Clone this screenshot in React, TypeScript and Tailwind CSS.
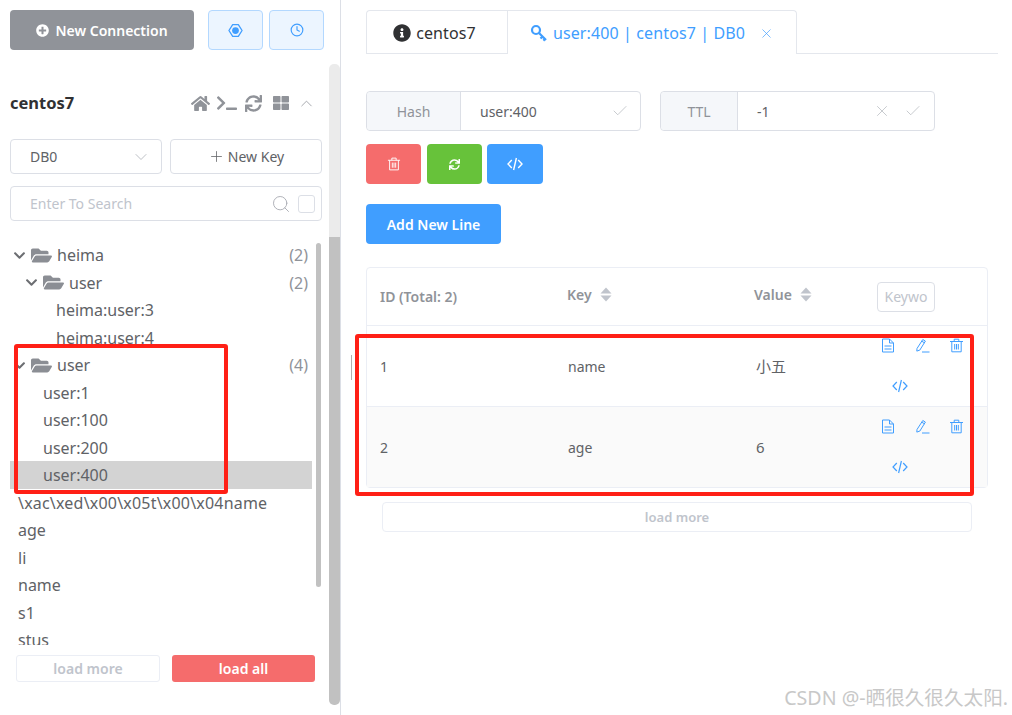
import { Clock, Check, X, ChevronDown, ChevronUp, Plus, Search } from 'lucide-react'
import { FaHome, FaTerminal, FaSync, FaThLarge, FaFolderOpen, FaChevronDown, FaInfoCircle, FaPlusCircle } from 'react-icons/fa'

function GearIcon() {
  return (
    <svg width="15" height="15" viewBox="0 0 16 16" className="text-[#409eff]">
      <path d="M5 1.8h6L15 8l-4 6.2H5L1 8Z" fill="none" stroke="currentColor" strokeWidth="1.4" strokeLinejoin="round" />
      <circle cx="8" cy="8" r="3.6" fill="currentColor" />
    </svg>
  )
}

function KeyIcon() {
  return (
    <svg width="18" height="18" viewBox="0 0 18 18" fill="none" stroke="currentColor" strokeWidth="2.2">
      <circle cx="6" cy="6" r="4" />
      <path d="M9 9l7 7M12.5 12.5l-2 2M15 15l-1.6 1.6" />
    </svg>
  )
}

function CodeIcon({ size = 16, strokeWidth = 1.2 }: { size?: number; strokeWidth?: number }) {
  return (
    <svg width={size} height={size} viewBox="0 0 16 16" fill="none" stroke="currentColor" strokeWidth={strokeWidth}>
      <path d="M4.8 4 1 8l3.8 4M11.2 4 15 8l-3.8 4M9.4 2 6.6 14" />
    </svg>
  )
}

function DocIcon() {
  return (
    <svg width="14" height="15" viewBox="0 0 14 15" fill="none" stroke="#409eff" strokeWidth="1">
      <path d="M1.5 1h7l4 4v9h-11Z" />
      <path d="M8.5 1v4h4M3.5 8h7M3.5 11h7" />
    </svg>
  )
}

function EditIcon() {
  return (
    <svg width="15" height="15" viewBox="0 0 15 15" fill="none" stroke="#409eff" strokeWidth="1">
      <path d="M2 10.5 7.8 1.5l2.6 1.6-5.6 9-3 1Z" />
      <path d="M6.8 3.2l2.6 1.6M7 14h7.5" />
    </svg>
  )
}

function TrashIcon({ color = '#409eff', size = 15 }: { color?: string; size?: number }) {
  return (
    <svg width={size} height={size} viewBox="0 0 15 15" fill="none" stroke={color} strokeWidth="1">
      <path d="M1 3.5h13M5.2 3.5V1.2h4.6v2.3M2.8 3.5v10.3h9.4V3.5M5.7 6v5.5M7.5 6v5.5M9.3 6v5.5" />
    </svg>
  )
}

function SortCaret() {
  return (
    <svg width="12" height="15" viewBox="0 0 12 15" fill="#c0c4cc">
      <path d="M6 0.5 11.5 6.5H.5Z" />
      <path d="M6 14.5 11.5 8.5H.5Z" />
    </svg>
  )
}

type TreeRow = {
  label: string
  indent: number
  folder?: boolean
  count?: number
  active?: boolean
  wide?: boolean
}

const rows: TreeRow[] = [
  { label: 'heima', indent: 3, folder: true, count: 2 },
  { label: 'user', indent: 15, folder: true, count: 2 },
  { label: 'heima:user:3', indent: 46 },
  { label: 'heima:user:4', indent: 46 },
  { label: 'user', indent: 3, folder: true, count: 4 },
  { label: 'user:1', indent: 33 },
  { label: 'user:100', indent: 33 },
  { label: 'user:200', indent: 33 },
  { label: 'user:400', indent: 33, active: true },
  { label: '\\xac\\xed\\x00\\x05t\\x00\\x04name', indent: 8, wide: true },
  { label: 'age', indent: 8 },
  { label: 'li', indent: 8 },
  { label: 'name', indent: 8 },
  { label: 's1', indent: 8 },
  { label: 'stus', indent: 8 },
]

const lines = [
  { id: 1, key: 'name', value: '小五' },
  { id: 2, key: 'age', value: '6' },
]

function Sidebar() {
  return (
    <aside className="flex h-full w-[341px] shrink-0 border-r border-[#dcdfe6] pl-[10px] pt-[10px]">
      <div className="w-[314px] shrink-0">
        <div className="flex h-[40px] items-stretch">
          <button className="flex w-[184px] items-center justify-center gap-[6px] rounded-[4px] bg-[#909399] text-[14px] font-semibold text-white">
            <FaPlusCircle size={13} />
            New Connection
          </button>
          <button className="ml-[14px] flex w-[55px] items-center justify-center rounded-[4px] border border-[#b3d8ff] bg-[#ecf5ff]">
            <GearIcon />
          </button>
          <button className="ml-[6px] flex w-[55px] items-center justify-center rounded-[4px] border border-[#b3d8ff] bg-[#ecf5ff]">
            <Clock size={14} color="#409eff" />
          </button>
        </div>

        <div className="mt-[35px] flex h-[36px] items-center text-[#909399]">
          <span className="text-[16.5px] font-bold text-[#303133]">centos7</span>
          <div className="ml-[117px] flex items-center">
            <FaHome size={19} />
            <FaTerminal size={20} className="ml-[7px]" />
            <FaSync size={17} className="ml-[8px]" />
            <FaThLarge size={16} className="ml-[11px]" />
            <ChevronUp size={19} strokeWidth={1} className="ml-[8px] text-[#909399]" />
          </div>
        </div>

        <div className="mt-[18px] flex h-[35px] w-[312px] gap-[8px] text-[14px]">
          <div className="flex w-[152px] items-center justify-between rounded-[4px] border border-[#dcdfe6] pl-[19px] pr-[10px] text-[#606266]">
            DB0
            <ChevronDown size={20} strokeWidth={1} className="text-[#b0b3b9]" />
          </div>
          <button className="flex w-[152px] items-center justify-center gap-[3px] rounded-[4px] border border-[#dcdfe6] text-[#606266]">
            <Plus size={17} strokeWidth={1.1} />
            New Key
          </button>
        </div>

        <div className="mt-[12px] flex h-[35px] w-[312px] items-center rounded-[4px] border border-[#dcdfe6] pl-[19px] pr-[6px] text-[14px] text-[#c0c4cc]">
          <span className="flex-1">Enter To Search</span>
          <Search size={20} strokeWidth={1.1} className="text-[#a8abb2]" />
          <span className="ml-[7px] h-[18px] w-[17px] rounded-[3px] border border-[#dcdfe6]" />
        </div>

        <div className="mt-[20px] flex h-[404px] items-start overflow-hidden">
          <div className="h-full w-[302px] shrink-0">
            {rows.map((row, i) => (
              <div
                key={i}
                className={`flex items-center pr-[4px] text-[16px] text-[#606266] ${i % 2 === 0 ? 'h-[28px]' : 'h-[27px]'} ${row.active ? 'bg-[#d3d3d3]' : ''}`}
                style={{ paddingLeft: row.indent }}
              >
                {row.folder && (
                  <>
                    <FaChevronDown size={13} className="mr-[5px] text-[#6c6e72]" />
                    <FaFolderOpen size={21} className="mr-[5px] text-[#8b8e94]" />
                  </>
                )}
                <span className={`flex-1 whitespace-nowrap ${row.wide ? 'tracking-[0.2px]' : ''}`}>{row.label}</span>
                {row.count !== undefined && <span className="text-[#909399]">({row.count})</span>}
              </div>
            ))}
          </div>
          <div className="ml-[4px] mt-[2px] h-[344px] w-[5px] rounded-[3px] bg-[#c1c1c1]" />
        </div>

        <div className="mt-[10px] flex h-[27px] gap-[12px] pl-[6px] text-[14px] font-semibold">
          <button className="w-[144px] rounded-[3px] border border-[#ebeef5] text-[#c0c4cc]">load more</button>
          <button className="w-[143px] rounded-[3px] bg-[#f56c6c] text-white">load all</button>
        </div>
      </div>

      <div className="mb-[10px] ml-[5px] mt-[54px] flex w-[11px] flex-col overflow-hidden rounded-[5px]">
        <div className="h-[173px] bg-[#ebebeb]" />
        <div className="flex-1 bg-[#c1c1c1]" />
      </div>
    </aside>
  )
}

function KeyDetail() {
  return (
    <main className="relative w-[647px] shrink-0 pl-[25px] pt-[10px]">
      <div className="flex h-[44px] w-[632px] border-b border-[#e4e7ed]">
        <div className="flex h-[44px] w-[141px] items-center justify-center gap-[5px] rounded-tl-[4px] border-b border-l border-t border-[#e4e7ed] pr-[5px] pt-[1px] text-[16px] text-[#303133]">
          <FaInfoCircle size={18} />
          <span className="tracking-[0.1px]">centos7</span>
        </div>
        <div className="flex h-[44px] w-[290px] items-center justify-center gap-[5px] rounded-tr-[4px] border-x border-t border-[#e4e7ed] bg-white pt-[1px] text-[16px] text-[#409eff]">
          <KeyIcon />
          <span className="tracking-[0.12px]">user:400 | centos7 | DB0</span>
          <X size={15} strokeWidth={1.1} className="ml-[9px]" />
        </div>
      </div>

      <div className="mt-[37px] flex h-[40px] gap-[19px] text-[14px]">
        <div className="flex w-[275px] rounded-[4px] border border-[#dcdfe6] text-[#606266]">
          <span className="flex w-[94px] items-center justify-center rounded-l-[4px] border-r border-[#dcdfe6] bg-[#f5f7fa] text-[#909399]">Hash</span>
          <span className="flex flex-1 items-center justify-between pl-[19px] pr-[11px]">
            user:400
            <Check size={18} strokeWidth={1} className="text-[#b6b9bf]" />
          </span>
        </div>
        <div className="flex w-[275px] rounded-[4px] border border-[#dcdfe6] text-[#606266]">
          <span className="flex w-[77px] items-center justify-center rounded-l-[4px] border-r border-[#dcdfe6] bg-[#f5f7fa] text-[#909399]">TTL</span>
          <span className="flex flex-1 items-center pl-[19px] pr-[12px]">
            <span className="flex-1">-1</span>
            <X size={18} strokeWidth={1} className="mr-[13px] text-[#b6b9bf]" />
            <Check size={18} strokeWidth={1} className="text-[#b6b9bf]" />
          </span>
        </div>
      </div>

      <div className="mt-[13px] flex h-[40px]">
        <button className="flex w-[55px] items-center justify-center rounded-[4px] bg-[#f56c6c]">
          <TrashIcon color="#ffffff" size={14} />
        </button>
        <button className="ml-[6px] flex w-[55px] items-center justify-center rounded-[4px] bg-[#67c23a] text-white">
          <FaSync size={11} />
        </button>
        <button className="ml-[5px] flex w-[56px] items-center justify-center rounded-[4px] bg-[#409eff] text-white">
          <CodeIcon size={16} strokeWidth={1.4} />
        </button>
      </div>

      <button className="mt-[20px] h-[40px] w-[135px] rounded-[4px] bg-[#409eff] text-[14px] font-semibold text-white">
        Add New Line
      </button>

      <div className="mt-[23px] w-[622px] rounded-[4px] border border-[#ebeef5] text-[14px] text-[#606266]">
        <div className="grid h-[58px] grid-cols-[187px_187px_124px_1fr] items-center border-b border-[#ebeef5] font-semibold text-[#909399]">
          <span className="pl-[13px]">ID (Total: 2)</span>
          <span className="flex items-center gap-[8px] pb-[4px] pl-[13px]">Key <SortCaret /></span>
          <span className="flex items-center gap-[8px] pb-[4px] pl-[13px]">Value <SortCaret /></span>
          <span className="pl-[12px] font-normal">
            <span className="flex h-[30px] w-[58px] items-center justify-center overflow-hidden rounded-[4px] border border-[#dcdfe6] text-[#c0c4cc]">Keywo</span>
          </span>
        </div>
        {lines.map((line, i) => (
          <div
            key={line.id}
            className={`grid grid-cols-[187px_187px_124px_1fr] items-center ${i === 0 ? 'h-[81px] border-b border-[#ebeef5]' : 'h-[80px] bg-[#fafafa]'}`}
          >
            <span className={`pl-[13px] ${i === 1 ? 'pt-[1px]' : ''}`}>{line.id}</span>
            <span className={`pl-[14px] ${i === 1 ? 'pt-[1px]' : ''}`}>{line.key}</span>
            <span className={`pl-[15px] text-[15px] ${i === 1 ? 'pt-[1px]' : ''}`}>{line.value}</span>
            <div className="flex h-full flex-col pl-[16px] pt-[12px] text-[#409eff]">
              <div className="flex w-[83px] justify-between">
                <DocIcon />
                <EditIcon />
                <TrashIcon />
              </div>
              <div className="ml-[11px] mt-[25px]">
                <CodeIcon />
              </div>
            </div>
          </div>
        ))}
      </div>

      <button className="ml-[16px] mt-[14px] h-[30px] w-[590px] rounded-[4px] border border-[#ebeef5] pt-[1px] text-[13px] font-semibold text-[#c0c4cc]">
        load more
      </button>

      {/* resize handle */}
      <div className="absolute left-[10px] top-[355px] h-[25px] w-px bg-[#b0b0b0]" />
    </main>
  )
}

export default function App() {
  return (
    <div
      className="relative flex h-[715px] w-[1012px] overflow-hidden bg-white"
      style={{ fontFamily: '"Noto Sans", "Noto Sans CJK SC", sans-serif' }}
    >
      <Sidebar />
      <KeyDetail />

      {/* annotations drawn over the screenshot */}
      <div className="absolute left-[14px] top-[344px] h-[150px] w-[214px] rounded-[3px] border-[4px] border-[#ff2016]" />
      <div className="absolute left-[355px] top-[334px] h-[162px] w-[619px] rounded-[3px] border-[4px] border-[#ff2016]" />
      <div className="absolute right-[4px] top-[683px] whitespace-nowrap text-[19.6px] text-[#c8c8c8]">CSDN @-晒很久很久太阳.</div>
    </div>
  )
}
